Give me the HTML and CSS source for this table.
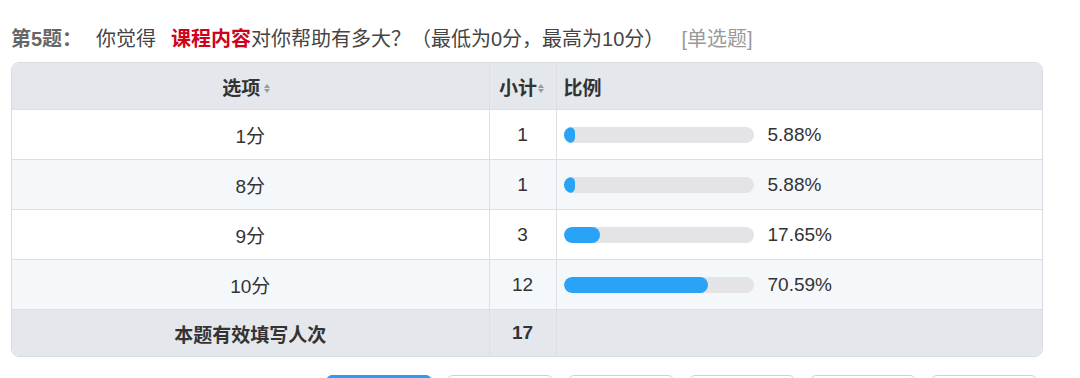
FILE: index.html
```html
<!DOCTYPE html>
<html lang="zh">
<head>
<meta charset="utf-8">
<link rel="stylesheet" href="styles.css">
</head>
<body>
<div class="page">
  <div class="q-title">
    <span class="q-num">第5题：</span>
    <span class="q-text">你觉得<span class="q-key">课程内容</span>对你帮助有多大？（最低为0分，最高为10分）</span>
    <span class="q-type">[单选题]</span>
  </div>
  <div class="table-wrap">
    <table class="stats">
      <colgroup>
        <col class="c-opt"><col class="c-cnt"><col class="c-pct">
      </colgroup>
      <thead>
        <tr>
          <th class="center opt-head">选项<span class="sort"><i class="up"></i><i class="down"></i></span></th>
          <th class="center tight">小计<span class="sort"><i class="up"></i><i class="down"></i></span></th>
          <th class="left">比例</th>
        </tr>
      </thead>
      <tbody>
        <tr>
          <td class="center">1分</td><td class="center">1</td>
          <td><div class="pct"><div class="track"><div class="fill" style="width:6.3%"></div></div><span class="num">5.88%</span></div></td>
        </tr>
        <tr class="alt">
          <td class="center">8分</td><td class="center">1</td>
          <td><div class="pct"><div class="track"><div class="fill" style="width:6.3%"></div></div><span class="num">5.88%</span></div></td>
        </tr>
        <tr>
          <td class="center">9分</td><td class="center">3</td>
          <td><div class="pct"><div class="track"><div class="fill" style="width:19%"></div></div><span class="num">17.65%</span></div></td>
        </tr>
        <tr class="alt">
          <td class="center">10分</td><td class="center">12</td>
          <td><div class="pct"><div class="track"><div class="fill" style="width:75.8%"></div></div><span class="num">70.59%</span></div></td>
        </tr>
      </tbody>
      <tfoot>
        <tr>
          <td class="center">本题有效填写人次</td><td class="center">17</td><td></td>
        </tr>
      </tfoot>
    </table>
  </div>
  <div class="buttons">
    <span class="btn active"></span>
    <span class="btn"></span>
    <span class="btn"></span>
    <span class="btn"></span>
    <span class="btn"></span>
    <span class="btn"></span>
  </div>
</div>
</body>
</html>
```
FILE: styles.css
```css
html, body {
  margin: 0;
  padding: 0;
  background: #fff;
}
body {
  font-family: "Liberation Sans", "Noto Sans CJK SC", sans-serif;
  color: #333;
  overflow: hidden;
  height: 378px;
}
.page {
  padding: 27px 0 0 11px;
  width: 1032px;
}
.q-title {
  display: flex;
  align-items: baseline;
  font-size: 20px;
  line-height: 24px;
  height: 24px;
  white-space: nowrap;
}
.q-num {
  font-weight: bold;
  color: #666;
  width: 85px;
}
.q-text {
  color: #444;
}
.q-key {
  color: #d0021b;
  font-weight: bold;
  margin-left: 15px;
}
.q-type {
  color: #999;
  margin-left: 17px;
}
.table-wrap {
  margin-top: 11px;
  border: 1px solid #d8dbdf;
  border-radius: 8px;
  overflow: hidden;
}
.stats {
  width: 100%;
  border-collapse: collapse;
  table-layout: fixed;
  font-size: 19px;
}
.c-opt { width: 477px; }
.c-cnt { width: 67px; }
.stats th, .stats td {
  border-left: 1px solid #dcdfe3;
  border-bottom: 1px solid #dcdfe3;
  padding: 0 7px;
}
.stats th:first-child, .stats td:first-child {
  border-left: none;
}
.stats thead th {
  background: #e4e7eb;
  height: 46px;
  font-weight: bold;
  color: #333;
}
.stats thead th.opt-head {
  padding-right: 15px;
}
.stats tbody td {
  height: 49px;
  background: #fff;
}
.stats tbody tr.alt td {
  background: #f5f8fb;
}
.stats tfoot td {
  background: #e4e7eb;
  height: 46px;
  font-weight: bold;
  border-bottom: none;
}
.center { text-align: center; }
.left { text-align: left; }
.stats th.tight { padding: 0 2px 0 0; }
.sort {
  display: inline-flex;
  flex-direction: column;
  gap: 1px;
  margin-left: 4px;
  vertical-align: middle;
  position: relative;
  top: -1px;
}
.stats th.tight .sort { margin-left: 1px; }
.sort i {
  width: 0;
  height: 0;
  border-left: 3.5px solid transparent;
  border-right: 3.5px solid transparent;
}
.sort .up { border-bottom: 4px solid #9a9a9a; }
.sort .down { border-top: 4px solid #9a9a9a; }
.pct {
  display: flex;
  align-items: center;
}
.track {
  width: 190px;
  height: 16px;
  border-radius: 8px;
  background: #e4e4e6;
  overflow: hidden;
}
.fill {
  height: 100%;
  border-radius: 8px;
  background: #29a3f5;
}
.num {
  margin-left: 14px;
  font-size: 19px;
  color: #333;
}
.buttons {
  display: flex;
  justify-content: flex-end;
  gap: 15px;
  margin-top: 18px;
  padding-right: 6px;
}
.btn {
  width: 104px;
  height: 30px;
  border: 1px solid #cfd3d7;
  border-radius: 6px;
  background: #fff;
}
.btn.active {
  background: #2a9df4;
  border-color: #2a9df4;
}
```
